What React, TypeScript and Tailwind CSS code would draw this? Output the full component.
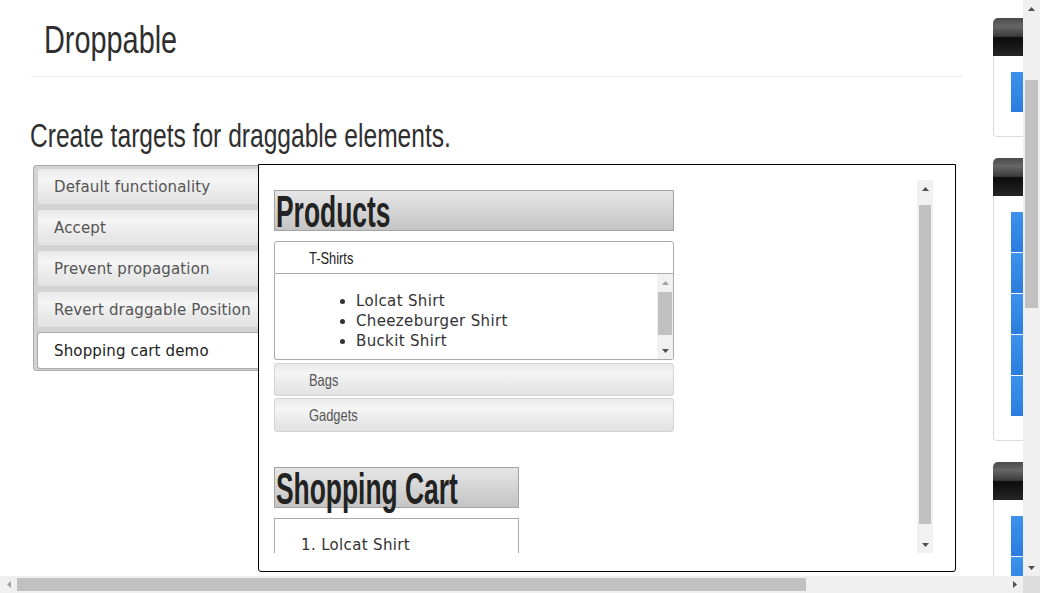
import React from "react";

type Dir = "up" | "down" | "left" | "right";

function Tri({ dir, color }: { dir: Dir; color: string }) {
  const vertical = dir === "up" || dir === "down";
  const w = vertical ? 7 : 4;
  const h = vertical ? 4 : 7;
  const pts = {
    up: "0,4 7,4 3.5,0",
    down: "0,0 7,0 3.5,4",
    left: "4,0 4,7 0,3.5",
    right: "0,0 0,7 4,3.5",
  }[dir];
  return (
    <svg width={w} height={h} viewBox={`0 0 ${w} ${h}`}>
      <polygon points={pts} fill={color} />
    </svg>
  );
}

const tabs = [
  "Default functionality",
  "Accept",
  "Prevent propagation",
  "Revert draggable Position",
  "Shopping cart demo",
];

function Oswald({
  children,
  className,
}: {
  children: React.ReactNode;
  className: string;
}) {
  return (
    <span
      className={
        "inline-block whitespace-nowrap origin-left font-['Liberation_Sans',Arial,sans-serif] " +
        className
      }
    >
      {children}
    </span>
  );
}

function Card({ bars }: { bars: number }) {
  return (
    <div className="w-[200px]">
      <div className="h-[38px] rounded-t-[5px] bg-[linear-gradient(to_bottom,#4a4a4a_0%,#666666_22%,#3c3c3c_48%,#0c0c0c_52%,#1a1a1a_80%,#262626_100%)]" />
      <div className="border-x border-b border-[#dddddd] rounded-b-[4px] bg-white pt-[16px] pb-[24px] pl-[17px]">
        <div className="flex flex-col gap-px bg-white">
          {Array.from({ length: bars }).map((_, i) => (
            <div
              key={i}
              className="h-[40px] w-[150px] bg-[linear-gradient(to_bottom,#3d92ec,#2a7ddf)]"
            />
          ))}
        </div>
      </div>
    </div>
  );
}

const stateDefault =
  "border border-[#d3d3d3] rounded-[3px] bg-[linear-gradient(to_bottom,#e9e9e9_0%,#f5f5f5_30%,#ededed_55%,#e2e2e2_100%)]";

export default function App() {
  return (
    <div className="w-[1040px] h-[593px] overflow-hidden bg-white flex flex-col font-['DejaVu_Sans',Verdana,sans-serif]">
      <div className="flex h-[576px]">
        {/* main viewport */}
        <div className="w-[1023px] h-[576px] overflow-hidden">
          <div className="flex">
            {/* main column */}
            <div className="w-[963px] shrink-0 pl-[30px]">
              <h1 className="pl-[14px] pt-[18px] pb-[14px] h-[77px] border-b border-[#eeeeee] text-[39px] leading-[44px] text-[#2f2f2f] font-normal">
                <Oswald className="scale-x-[0.74]">Droppable</Oswald>
              </h1>
              <h2 className="mt-[39px] h-[40px] text-[33px] leading-[40px] text-[#2f2f2f] font-normal">
                <Oswald className="scale-x-[0.745]">
                  Create targets for draggable elements.
                </Oswald>
              </h2>

              <div className="mt-[8px] flex items-start">
                {/* tabs */}
                <div className="ml-[3px] mt-[1px] w-[225px] border border-r-0 border-[#aaaaaa] rounded-l-[4px] bg-[#d3d3d3] pt-[2px] pb-[1px] pl-[3px] flex flex-col gap-[4px]">
                  {tabs.map((t, i) => {
                    const active = i === tabs.length - 1;
                    return (
                      <div
                        key={t}
                        className={
                          active
                            ? "h-[37px] flex items-center pl-[16px] border border-r-0 border-[#aaaaaa] rounded-l-[3px] bg-white text-[15px] leading-[18px] tracking-[0.15px] text-[#212121] whitespace-nowrap"
                            : "h-[37px] flex items-center pl-[16px] pt-[1px] border border-r-0 border-[#d3d3d3] rounded-l-[3px] bg-[linear-gradient(to_bottom,#e9e9e9_0%,#f5f5f5_30%,#ededed_55%,#e2e2e2_100%)] text-[15px] leading-[18px] tracking-[0.15px] text-[#555555] whitespace-nowrap"
                        }
                      >
                        {t}
                      </div>
                    );
                  })}
                </div>

                {/* demo frame */}
                <div className="w-[698px] h-[408px] border border-black rounded-b-[3px] bg-white pl-[15px] pt-[15px]">
                  <div className="flex h-[373px]">
                    <div className="w-[643px] h-[373px] overflow-hidden pt-[10px]">
                      {/* Products */}
                      <div className="w-[400px] h-[41px] border border-[#a3a3a3] bg-[linear-gradient(to_bottom,#e6e6e6,#c4c4c4)] pt-[1px] pl-px">
                        <Oswald className="scale-x-[0.6] text-[44px] leading-[39px] font-bold text-[#222222]">
                          Products
                        </Oswald>
                      </div>

                      {/* accordion */}
                      <div className="w-[400px] mt-[10px]">
                        <div className="h-[33px] border border-[#aaaaaa] rounded-t-[3px] bg-white pl-[34px] pt-[5px]">
                          <Oswald className="scale-x-[0.78] text-[16.5px] leading-[20px] text-[#212121]">
                            T-Shirts
                          </Oswald>
                        </div>
                        <div className="h-[86px] border-x border-b border-[#aaaaaa] rounded-b-[3px] flex">
                          <ul className="flex-1 pt-[17px] text-[15px] leading-[20px] tracking-[0.35px] text-[#333333]">
                            {["Lolcat Shirt", "Cheezeburger Shirt", "Buckit Shirt"].map(
                              (s) => (
                                <li key={s} className="flex items-center h-[20px]">
                                  <span className="ml-[65px] w-[5px] h-[5px] rounded-full bg-[#333333]" />
                                  <span className="ml-[11px]">{s}</span>
                                </li>
                              )
                            )}
                          </ul>
                          <div className="w-[16px] bg-[#f1f1f1] flex flex-col">
                            <div className="h-[17px] flex items-center justify-center">
                              <Tri dir="up" color="#a3a3a3" />
                            </div>
                            <div className="mt-[1px] ml-[1px] w-[14px] h-[43px] bg-[#c1c1c1]" />
                            <div className="flex-1" />
                            <div className="h-[17px] flex items-center justify-center">
                              <Tri dir="down" color="#505050" />
                            </div>
                          </div>
                        </div>
                        <div className={"mt-[3px] h-[33px] pl-[34px] pt-[5px] " + stateDefault}>
                          <Oswald className="scale-x-[0.78] text-[16.5px] leading-[20px] text-[#555555]">
                            Bags
                          </Oswald>
                        </div>
                        <div className={"mt-[2px] h-[34px] pl-[34px] pt-[5px] " + stateDefault}>
                          <Oswald className="scale-x-[0.78] text-[16.5px] leading-[20px] text-[#555555]">
                            Gadgets
                          </Oswald>
                        </div>
                      </div>

                      {/* Shopping cart */}
                      <div className="mt-[35px] w-[245px] h-[41px] border border-[#a3a3a3] bg-[linear-gradient(to_bottom,#e6e6e6,#c4c4c4)] pt-[1px] pl-px">
                        <Oswald className="scale-x-[0.6] text-[44px] leading-[39px] font-bold text-[#222222]">
                          Shopping Cart
                        </Oswald>
                      </div>
                      <div className="mt-[10px] w-[245px] h-[80px] border border-[#aaaaaa] pt-[16px] pl-[26px]">
                        <ol className="text-[15px] leading-[20px] tracking-[0.35px] text-[#333333]">
                          <li>1. Lolcat Shirt</li>
                        </ol>
                      </div>
                    </div>

                    {/* frame scrollbar */}
                    <div className="w-[16px] h-[373px] bg-[#f1f1f1] flex flex-col">
                      <div className="h-[18px] flex items-center justify-center">
                        <Tri dir="up" color="#505050" />
                      </div>
                      <div className="mt-[7px] ml-[2px] w-[12px] h-[319px] bg-[#c1c1c1]" />
                      <div className="flex-1" />
                      <div className="h-[16px] flex items-center justify-center">
                        <Tri dir="down" color="#505050" />
                      </div>
                    </div>
                  </div>
                </div>
              </div>
            </div>

            {/* sidebar */}
            <div className="ml-[30px] shrink-0 pt-[18px] flex flex-col gap-[21px]">
              <Card bars={1} />
              <Card bars={5} />
              <Card bars={5} />
            </div>
          </div>
        </div>

        {/* page vertical scrollbar */}
        <div className="w-[17px] h-[576px] bg-[#f0f0f0] flex flex-col">
          <div className="h-[17px] flex items-center justify-center">
            <Tri dir="up" color="#505050" />
          </div>
          <div className="mt-[63px] ml-[2px] w-[13px] h-[228px] bg-[#c1c1c1]" />
          <div className="flex-1" />
          <div className="h-[17px] flex items-center justify-center">
            <Tri dir="down" color="#505050" />
          </div>
        </div>
      </div>

      {/* page horizontal scrollbar */}
      <div className="h-[17px] flex bg-[#f0f0f0]">
        <div className="w-[17px] flex items-center justify-center">
          <Tri dir="left" color="#a3a3a3" />
        </div>
        <div className="mt-[2px] w-[789px] h-[13px] bg-[#c1c1c1]" />
        <div className="flex-1" />
        <div className="w-[17px] flex items-center justify-center">
          <Tri dir="right" color="#505050" />
        </div>
        <div className="w-[17px] bg-[#dcdcdc]" />
      </div>
    </div>
  );
}
